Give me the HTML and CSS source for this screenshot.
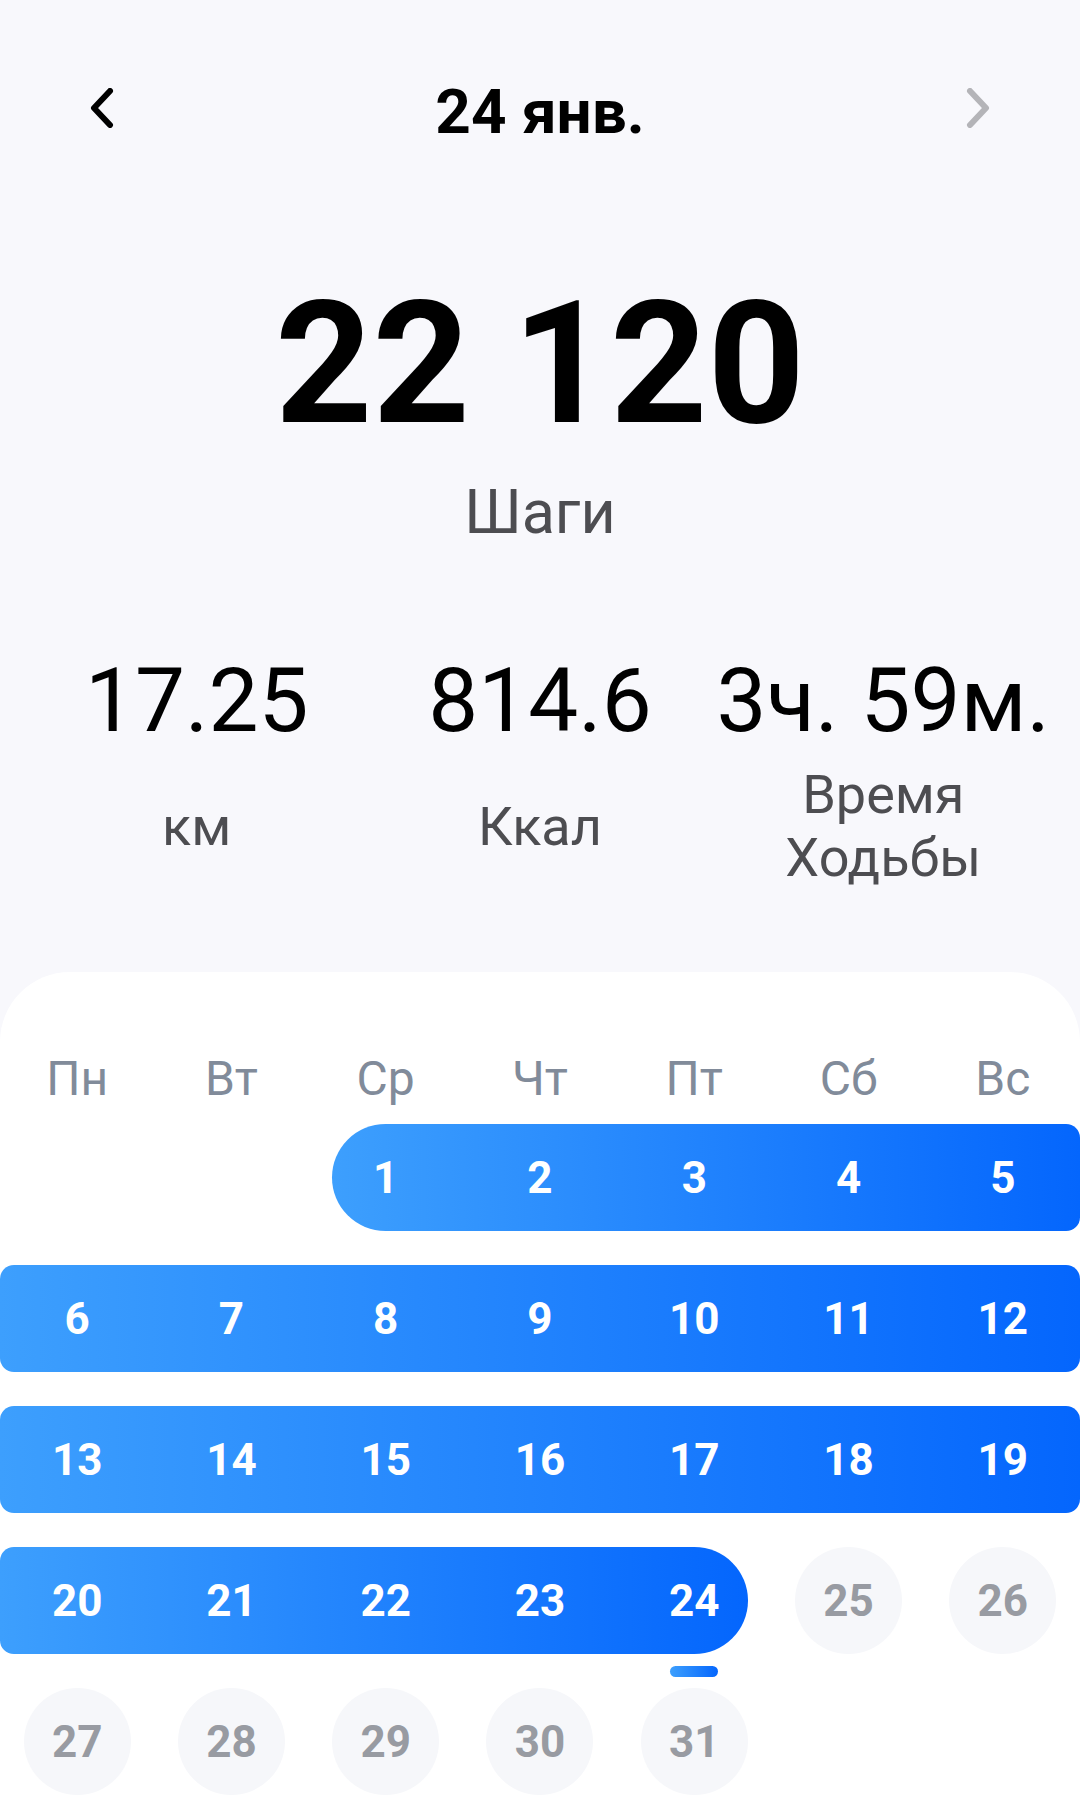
FILE: index.html
```html
<!DOCTYPE html>
<html lang="ru">
<head>
<meta charset="utf-8">
<meta name="viewport" content="width=device-width, initial-scale=1.0">
<title>Шаги - 24 янв.</title>
<link rel="stylesheet" href="styles.css">
</head>
<body>

<div class="top">
  <div class="nav">
    <svg class="chev" width="28" height="40" viewBox="0 0 28 40"><path d="M22 3 L6 20 L22 37"/></svg>
    <div class="date">24 янв.</div>
    <svg class="chev next" width="28" height="40" viewBox="0 0 28 40"><path d="M6 3 L22 20 L6 37"/></svg>
  </div>

  <div class="steps">22 120</div>
  <div class="steps-label">Шаги</div>

  <div class="stats">
    <div class="val">17.25</div>
    <div class="val">814.6</div>
    <div class="val">3ч. 59м.</div>
    <div class="lbl">км</div>
    <div class="lbl">Ккал</div>
    <div class="lbl">Время<br>Ходьбы</div>
  </div>
</div>

<div class="cal">
  <div class="week-head">
    <span>Пн</span><span>Вт</span><span>Ср</span><span>Чт</span><span>Пт</span><span>Сб</span><span>Вс</span>
  </div>

  <div class="month">
    <div class="week">
      <span class="blank"></span><span class="blank"></span>
      <div class="range start">
        <span class="d">1</span><span class="d">2</span><span class="d">3</span><span class="d">4</span><span class="d">5</span>
      </div>
    </div>
    <div class="week">
      <div class="range">
        <span class="d">6</span><span class="d">7</span><span class="d">8</span><span class="d">9</span><span class="d">10</span><span class="d">11</span><span class="d">12</span>
      </div>
    </div>
    <div class="week">
      <div class="range">
        <span class="d">13</span><span class="d">14</span><span class="d">15</span><span class="d">16</span><span class="d">17</span><span class="d">18</span><span class="d">19</span>
      </div>
    </div>
    <div class="week">
      <div class="range end">
        <span class="d">20</span><span class="d">21</span><span class="d">22</span><span class="d">23</span><span class="d today">24</span>
      </div>
      <span class="d off">25</span><span class="d off">26</span>
    </div>
    <div class="week">
      <span class="d off">27</span><span class="d off">28</span><span class="d off">29</span><span class="d off">30</span><span class="d off">31</span>
    </div>
  </div>
</div>

</body>
</html>
```

FILE: styles.css
```css
body {
  margin: 0;
  background: #f8f8fc;
  font-family: Roboto, "Noto Sans", sans-serif;
  color: #000;
  --cell: calc(1080px / 7);
  --dot: 107px;
  --gap: calc((var(--cell) - var(--dot)) / 2);
  --blue: linear-gradient(90deg, #3d9ffd, #0466fd);
}

/* top: date + totals */
.nav {
  display: flex;
  justify-content: space-between;
  align-items: flex-start;
  padding: 75px 88px 0;
  height: 73px;
}
.date {
  font-size: 62px;
  font-weight: 700;
  line-height: 73px;
}
.chev {
  margin-top: 13px;
  fill: none;
  stroke: #000;
  stroke-width: 6;
  stroke-linecap: round;
  stroke-linejoin: round;
}
.chev.next {
  stroke: #b4b4b8;
}
.steps {
  margin-top: 117px;
  font-size: 170px;
  font-weight: 700;
  line-height: 199px;
  text-align: center;
}
.steps-label {
  margin-top: 12px;
  font-size: 61px;
  line-height: 72px;
  color: #4d4d51;
  text-align: center;
}
.stats {
  display: grid;
  grid-template-columns: repeat(3, 1fr);
  align-items: center;
  margin-top: 100px;
  padding: 0 25px;
  text-align: center;
}
.val {
  font-size: 89px;
  line-height: 106px;
  white-space: nowrap;
  margin-bottom: 9px;
}
.lbl {
  font-size: 54px;
  line-height: 63px;
  color: #4d4d51;
}

/* calendar card */
.cal {
  margin-top: 83px;
  padding: 78px 0 21px;
  background: #fff;
  border-radius: 70px 70px 0 0;
}
.week-head {
  display: flex;
  font-size: 48px;
  color: #818b9a;
}
.week-head span {
  width: var(--cell);
  text-align: center;
}
.month {
  display: flex;
  flex-direction: column;
  gap: 34px;
  margin-top: 17px;
}
.week {
  display: flex;
  height: var(--dot);
}
.blank {
  width: var(--cell);
}
.range {
  display: flex;
  background: var(--blue);
  border-radius: 14px;
}
.range.start {
  margin-left: var(--gap);
  border-top-left-radius: 54px;
  border-bottom-left-radius: 54px;
}
.range.start .d:first-child {
  margin-left: 0;
}
.range.end {
  margin-right: var(--gap);
  border-top-right-radius: 54px;
  border-bottom-right-radius: 54px;
}
.range.end .d:last-child {
  margin-right: 0;
}
.d {
  position: relative;
  display: flex;
  align-items: center;
  justify-content: center;
  width: var(--dot);
  height: var(--dot);
  margin: 0 var(--gap);
  font-size: 44px;
  font-weight: 700;
  color: #fff;
}
.d.off {
  border-radius: 50%;
  background: #f6f7fa;
  color: #989ba2;
}
.d.today::after {
  content: "";
  position: absolute;
  left: 50%;
  top: calc(100% + 12px);
  width: 48px;
  height: 11px;
  margin-left: -24px;
  border-radius: 6px;
  background: var(--blue);
}
```
